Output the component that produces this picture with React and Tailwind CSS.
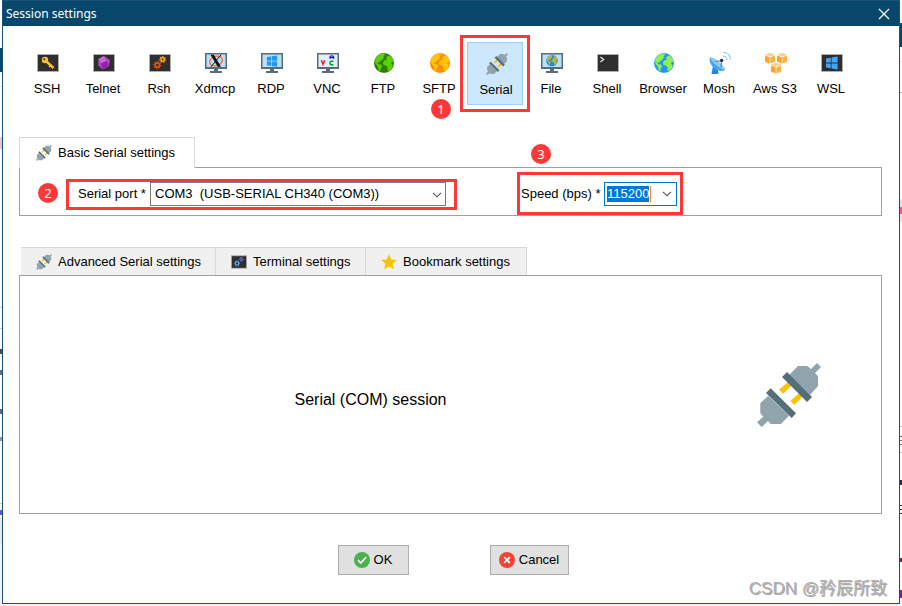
import { useEffect, useRef, useState } from 'react';

function PlugIcon({ className = 'size-4' }) {
  return (
    <svg viewBox="0 0 64 64" className={className} aria-hidden="true">
      <path fill="#ffc107" d="M30.7 19.3 34.5 22.7 26 30.7 22 26.7ZM42 30.3 45.3 33.7 37.3 42 33.3 38Z" />
      <path fill="#90a4ae" d="M32 12 41 3H50L54 6 60 0 64 4 58 10 61 13V23L53 32Z" />
      <path fill="#90a4ae" d="M11.3 32.7 3.3 40.3V50.3L6.3 53.7 0 59.3 4.7 64 11 58 13.7 61H24L32 52.7Z" />
      <path fill="#546e7a" d="M30 9 55 34 50 39 25 14ZM13.7 25.3 39 50.3 34.7 55 9 30Z" />
    </svg>
  );
}

function Terminal({ children, className = 'w-[22px] h-[22px]' }) {
  return (
    <svg viewBox="0 0 22 22" className={className} aria-hidden="true">
      <rect x="0.5" y="2.5" width="21" height="17" fill="#2f2f2f" stroke="#b0b0b0" />
      {children}
    </svg>
  );
}

function Monitor({ children, screen = '#bbdefb' }) {
  return (
    <svg viewBox="0 0 22 22" className="w-[22px] h-[22px]" aria-hidden="true">
      <path fill="#546e7a" d="M0 1H22V17H0ZM9 17H13V19H17V21H5V19H9Z" />
      <rect x="1.5" y="2.5" width="19" height="12.5" fill={screen} />
      {children}
    </svg>
  );
}

function GlobeShape({ sea, land }) {
  return (
    <>
      <circle cx="11" cy="11" r="10" fill={sea} />
      <path
        fill={land}
        d="M2.2 7C3.4 4.4 6 2.2 9 1.4L11.4 1.6 12 3 10.2 4.2 11.6 5.4 9.8 6.4 9.4 8 7.4 8.8 6.6 10.6 4.4 10.2 5 12.2 8 12.6 9.2 14.4 7.6 16.6 7.2 19.8C5.4 18.8 5.2 16.6 5 14.8L2.2 11.4ZM15.2 3.4 17.4 4.2C19.4 6 20.6 8 20.8 10.4L19 9.8 18 11.4 19.8 13.2 18.8 16.4 15.8 19.2 14.4 18 14.6 15.2 13 13.4 10.6 13 9.8 10.8 11.4 8.4 14 7.6 13 6Z"
      />
    </>
  );
}

function Globe({ sea, land }) {
  return (
    <svg viewBox="0 0 22 22" className="w-[22px] h-[22px]" aria-hidden="true">
      <GlobeShape sea={sea} land={land} />
    </svg>
  );
}

function Gear({ cx, cy, r, color }) {
  return (
    <g fill="none" stroke={color}>
      <circle cx={cx} cy={cy} r={r} strokeWidth="1.7" />
      <circle cx={cx} cy={cy} r={r + 1.2} strokeWidth="1.2" strokeDasharray="1.3 1.3" />
    </g>
  );
}

function WindowsShape({ color }) {
  return <path fill={color} d="M5 6.4 9.8 5.7V10.6H5ZM10.6 5.5 16.6 4.6V10.6H10.6ZM5 11.4H9.8V16.3L5 15.6ZM10.6 11.4H16.6V17.4L10.6 16.5Z" />;
}

function Cube({ x, y }) {
  return (
    <g transform={`translate(${x} ${y})`}>
      <path fill="#fbb040" d="M5 0 9.6 1.7 5 3.4 0.4 1.7Z" />
      <path fill="#f9a530" d="M0 2.5 4.7 4.2V10.6L0 8.7Z" />
      <path fill="#fbb040" d="M5.3 4.2 10 2.5V8.7L5.3 10.6Z" />
      <path fill="none" stroke="#fff" strokeWidth="0.5" d="M2.6 1.7 5 0.9 7.3 1.7 5 2.5Z" />
    </g>
  );
}

const sessions = [
  {
    name: 'SSH',
    icon: (
      <Terminal>
        <circle cx="8" cy="8" r="3.2" fill="#fbc02d" />
        <path stroke="#fbc02d" strokeWidth="2.4" d="M9 9 16.5 16" />
        <path stroke="#fbc02d" strokeWidth="1.2" d="M12 15 14 13" />
        <circle cx="7.2" cy="7.2" r="1" fill="#2f2f2f" />
      </Terminal>
    ),
  },
  {
    name: 'Telnet',
    icon: (
      <Terminal>
        <path fill="#ab47bc" d="M11 4 17 8 16 14.5 10 17.5 5 13.5 5.5 7Z" />
        <path fill="#ce63dd" d="M11 4 13.5 9 8 11.5 5.5 7Z" />
        <path fill="#8e24aa" d="M13.5 9 16 14.5 10 17.5 8 11.5Z" />
      </Terminal>
    ),
  },
  {
    name: 'Rsh',
    icon: (
      <Terminal>
        <Gear cx={8.3} cy={13} r={2.2} color="#e65100" />
        <Gear cx={13.6} cy={7.4} r={1.7} color="#fb9b14" />
      </Terminal>
    ),
  },
  {
    name: 'Xdmcp',
    icon: (
      <Monitor>
        <ellipse cx="11" cy="9" rx="6.5" ry="4.6" fill="none" stroke="#f4743b" strokeWidth="1.4" transform="rotate(-20 11 9)" />
        <path fill="#111" d="M5.5 2.8H8.8L16 14.8H12.7Z" />
        <path stroke="#111" strokeWidth="1" d="M16 2.8 6 14.8" />
      </Monitor>
    ),
  },
  {
    name: 'RDP',
    icon: (
      <Monitor>
        <g transform="translate(1.5 -.6) scale(.88)">
          <WindowsShape color="#2196f3" />
        </g>
      </Monitor>
    ),
  },
  {
    name: 'VNC',
    icon: (
      <Monitor screen="#e1effb">
        <path fill="none" stroke="#f01818" strokeWidth="1.5" d="M4.3 8.3 6 12.4 7.7 8.3" />
        <path fill="none" stroke="#1a1ae0" strokeWidth="1.3" d="M13 6.8V4.8Q13 3.8 14.8 3.8T16.6 4.8V6.8M13 5.6H16.6" />
        <path fill="none" stroke="#0b9b2c" strokeWidth="1.5" d="M16.4 9.2H14.2Q13 9.2 13 11T14.2 12.8H16.4" />
      </Monitor>
    ),
  },
  { name: 'FTP', icon: <Globe sea="#2e7d07" land="#5bd10c" /> },
  { name: 'SFTP', icon: <Globe sea="#ff8c00" land="#ffc50a" /> },
  { name: 'Serial', icon: <PlugIcon className="w-[22px] h-[22px]" /> },
  {
    name: 'File',
    icon: (
      <Monitor>
        <g transform="translate(4.7 2.4) scale(.57)">
          <GlobeShape sea="#1e88e5" land="#b5b832" />
        </g>
      </Monitor>
    ),
  },
  {
    name: 'Shell',
    icon: (
      <Terminal>
        <path fill="none" stroke="#e0e0e0" strokeWidth="1.3" d="M3.4 5 6.6 7.5 3.4 10" />
      </Terminal>
    ),
  },
  { name: 'Browser', icon: <Globe sea="#2196f3" land="#8cf04f" /> },
  {
    name: 'Mosh',
    icon: (
      <svg viewBox="0 0 22 22" className="w-[22px] h-[22px]" aria-hidden="true">
        <path fill="#1e88e5" d="M4 14 9 18.5 9.5 22H2.5Z" />
        <path fill="#42a5f5" d="M1.2 5.2C-.8 9 2.4 14.4 6.8 17.2 10.6 19.4 14.6 19.6 16.4 17.6Z" />
        <path fill="#90caf9" d="M1.2 5.2C5 4.8 15.5 13.2 16.4 17.6 12 17.8 2.2 10.4 1.2 5.2Z" />
        <path stroke="#37627f" strokeWidth=".8" d="M12.5 8.5 6.5 9.6M12.5 8.5 12 15.5" />
        <circle cx="12.6" cy="8.4" r="1.6" fill="#1a237e" />
        <path fill="none" stroke="#64b5f6" strokeWidth="1" strokeDasharray="4 .6" d="M14 4Q17.8 4.2 18 8M14.5.5Q21 .8 21.4 7.5" />
      </svg>
    ),
  },
  {
    name: 'Aws S3',
    icon: (
      <svg viewBox="0 0 22 22" className="w-[22px] h-[22px]" aria-hidden="true">
        <Cube x={0} y={1} />
        <Cube x={12} y={1} />
        <Cube x={6} y={11} />
      </svg>
    ),
  },
  {
    name: 'WSL',
    icon: (
      <Terminal>
        <WindowsShape color="#42a5f5" />
      </Terminal>
    ),
  },
];

const settingsTabs = [
  { label: 'Advanced Serial settings', width: 'min-w-[195px]', icon: <PlugIcon /> },
  {
    label: 'Terminal settings',
    width: 'min-w-[150px]',
    icon: (
      <Terminal className="size-4">
        <Gear cx={8.3} cy={13} r={2.4} color="#4fa8f0" />
        <Gear cx={14.2} cy={7.4} r={1.6} color="#5c6bc0" />
      </Terminal>
    ),
  },
  {
    label: 'Bookmark settings',
    width: 'min-w-[161px]',
    icon: (
      <svg viewBox="0 0 16 16" className="size-4" aria-hidden="true">
        <path fill="#f5c400" d="M8 .5 10.3 5.5 15.8 6 11.7 9.8 12.9 15.3 8 12.4 3.1 15.3 4.3 9.8.2 6 5.7 5.5Z" />
      </svg>
    ),
  },
];

// slivers of the windows behind the dialog
const leftEdge = [
  ['h-[48px]', 'bg-white'],
  ['h-[24px]', 'bg-[#07476b]'],
  ['h-[14px]', 'bg-white'],
  ['h-px', 'bg-[#e0e0e0]'],
  ['h-[50px]', 'bg-white'],
  ['h-[12px]', 'bg-[#e5c9cb]'],
  ['h-[158px]', 'bg-white'],
  ['h-px', 'bg-[#d0d0d0]'],
  ['h-[20px]', 'bg-white'],
  ['h-px', 'bg-[#d0d0d0]'],
  ['h-[20px]', 'bg-white'],
  ['h-[5px]', 'bg-[#5a4a3a]'],
  ['h-[16px]', 'bg-white'],
  ['h-[5px]', 'bg-[#5b6f9a]'],
  ['h-[34px]', 'bg-white'],
  ['h-[5px]', 'bg-[#6a5aae]'],
  ['h-[23px]', 'bg-white'],
  ['h-[4px]', 'bg-[#8f8fd0]'],
  ['h-[62px]', 'bg-white'],
  ['h-px', 'bg-[#d0d0d0]'],
  ['h-[6px]', 'bg-white'],
  ['h-[5px]', 'bg-[#5a5af0]'],
  ['h-[3px]', 'bg-white'],
  ['h-[26px]', 'bg-[#e8e8e8]'],
];

const rightEdge = [
  ['h-[23px]', 'bg-white'],
  ['h-[24px]', 'bg-[#07476b]'],
  ['h-[14px]', 'bg-white'],
  ['h-px', 'bg-[#e0e0e0]'],
  ['h-[30px]', 'bg-white'],
  ['h-px', 'bg-[#a8a8a8]'],
  ['h-[106px]', 'bg-white'],
  ['h-[8px]', 'bg-[#e4e4e4]'],
  ['h-[7px]', 'bg-[#f055a0]'],
  ['h-[8px]', 'bg-[#e4e4e4]'],
  ['h-[204px]', 'bg-white'],
  ['h-px', 'bg-[#c0c0c0]'],
  ['h-[9px]', 'bg-white'],
  ['h-px', 'bg-[#707070]'],
  ['h-[3px]', 'bg-white'],
  ['h-px', 'bg-[#707070]'],
  ['h-[3px]', 'bg-white'],
  ['h-px', 'bg-[#707070]'],
  ['h-[7px]', 'bg-white'],
  ['h-px', 'bg-[#c0c0c0]'],
  ['h-[27px]', 'bg-white'],
  ['h-[5px]', 'bg-[#1b2f55]'],
  ['h-[20px]', 'bg-white'],
  ['h-px', 'bg-[#303030]'],
  ['h-[3px]', 'bg-white'],
  ['h-px', 'bg-[#303030]'],
  ['h-[3px]', 'bg-white'],
  ['h-px', 'bg-[#303030]'],
  ['h-[44px]', 'bg-white'],
  ['h-[4px]', 'bg-[#5a2a70]'],
  ['h-[28px]', 'bg-white'],
  ['h-[8px]', 'bg-[#7a20a0]'],
];

function Edge({ parts }) {
  return (
    <div className="w-0.5 shrink-0" aria-hidden="true">
      {parts.map(([height, color], i) => (
        <div key={i} className={`${height} ${color}`} />
      ))}
    </div>
  );
}

function Badge({ children, className = '' }) {
  return (
    <span className={`flex size-5 shrink-0 items-center justify-center rounded-full bg-[#fd3838] font-['Noto_Sans',sans-serif] text-[13px] leading-none text-white ${className}`}>
      {children}
    </span>
  );
}

function Chevron({ className = '' }) {
  return (
    <svg viewBox="0 0 10 6" className={`h-1.5 w-2.5 ${className}`} aria-hidden="true">
      <path fill="none" stroke="#505050" strokeWidth="1.1" d="M1 .8 5 4.8 9 .8" />
    </svg>
  );
}

export default function App() {
  const [session, setSession] = useState('Serial');
  const [port, setPort] = useState('COM3');
  const [speed, setSpeed] = useState('115200');
  const speedRef = useRef(null);

  useEffect(() => {
    speedRef.current?.focus();
    speedRef.current?.select();
  }, []);

  return (
    <div className="flex min-h-screen bg-[#f4f4f6] font-['Liberation_Sans',Arial,sans-serif] text-[13px] leading-4 text-black">
      <Edge parts={leftEdge} />

      <div className="relative mb-0.5 flex min-w-0 flex-1 flex-col border border-[#1b5276] bg-white">
        <header className="flex h-[25px] items-center justify-between bg-[#07476b] pl-[3px] pr-[9px] text-white">
          <h1 className="font-['Noto_Sans',sans-serif] text-[12px]">Session settings</h1>
          <button type="button" aria-label="Close">
            <svg viewBox="0 0 12 12" className="size-3" aria-hidden="true">
              <path stroke="#fff" strokeWidth="1.3" d="M1 1 11 11M11 1 1 11" />
            </svg>
          </button>
        </header>

        {/* Session types */}
        <nav className="mt-4 flex pl-4">
          {sessions.map(({ name, icon }) => (
            <div key={name} className="relative w-14 shrink-0">
              <button
                type="button"
                onClick={() => setSession(name)}
                className={`flex h-[63px] w-full flex-col items-center gap-[7px] whitespace-nowrap border ${
                  session === name ? 'border-[#99d1ff] bg-[#cce8ff] pl-0.5 pt-[10px]' : 'border-transparent pt-[9px]'
                }`}
              >
                <span className="pl-0.5">{icon}</span>
                {name}
              </button>
              {name === 'Serial' && (
                <>
                  <div className="pointer-events-none absolute -inset-[7px] border-3 border-[#fd3838]" />
                  <Badge className="absolute -left-9 top-[57px]">1</Badge>
                </>
              )}
            </div>
          ))}
        </nav>

        {/* Basic settings */}
        <section className="mt-8 pl-4 pr-[17px]">
          <div className="flex">
            <button type="button" className="relative z-10 -mb-px flex h-[31px] w-[176px] items-center gap-[6px] border border-b-0 border-[#d9d9d9] bg-white pl-4">
              <PlugIcon />
              Basic Serial settings
            </button>
          </div>
          <div className="flex h-[49px] items-start border border-[#a0a0a0]">
            <Badge className="ml-[18px] mt-[15px]">2</Badge>
            <div className="ml-2 mt-[11px] flex h-[31px] w-[391px] items-start border-3 border-[#fd3838] pl-[9px]">
              <label htmlFor="port" className="w-[72px] leading-6">Serial port *</label>
              <div className="relative w-[296px]">
                <select
                  id="port"
                  value={port}
                  onChange={(e) => setPort(e.target.value)}
                  className="block h-6 w-full appearance-none border border-[#7a7a7a] bg-white pl-1 pr-6"
                >
                  <option value="COM3">{'COM3\u00a0 (USB-SERIAL CH340 (COM3))'}</option>
                </select>
                <Chevron className="pointer-events-none absolute right-1 top-[10px]" />
              </div>
            </div>
            <div className="relative ml-[60px] mt-1 flex h-[43px] w-[166px] items-center border-3 border-[#fd3838] pl-px">
              <Badge className="absolute -top-[31px] left-[11px]">3</Badge>
              <label htmlFor="speed" className="w-[83px]">Speed (bps) *</label>
              <div className="flex h-6 w-[73px] items-center justify-between border border-[#0078d7] bg-white pl-0.5 pr-1">
                <input
                  id="speed"
                  ref={speedRef}
                  value={speed}
                  onChange={(e) => setSpeed(e.target.value)}
                  className="h-4 w-[44px] border-r border-[#f08a30] leading-4 outline-none selection:bg-[#0078d7] selection:text-white"
                />
                <button type="button" aria-label="Choose speed">
                  <Chevron />
                </button>
              </div>
            </div>
          </div>
        </section>

        {/* Advanced settings */}
        <section className="mt-[31px] flex flex-1 flex-col pl-4 pr-[17px]">
          <div className="flex pl-0.5">
            {settingsTabs.map(({ label, width, icon }) => (
              <button
                key={label}
                type="button"
                className={`flex h-7 items-center gap-[6px] border-r border-t border-[#d9d9d9] bg-[#f0f0f0] pl-[15px] pt-px ${width}`}
              >
                {icon}
                {label}
              </button>
            ))}
          </div>
          <div className="flex min-h-[239px] items-center border border-[#a0a0a0]">
            <p className="flex-1 pt-2.5 text-center text-[16px] leading-5">Serial (COM) session</p>
            <div className="flex w-40 justify-center pr-6">
              <PlugIcon className="size-16" />
            </div>
          </div>
        </section>

        <footer className="mb-7 flex justify-center gap-[81px] pl-1">
          <button type="button" className="flex h-[30px] w-[71px] items-center justify-center gap-1 border border-[#adadad] bg-[#e1e1e1]">
            <svg viewBox="0 0 16 16" className="size-4" aria-hidden="true">
              <circle cx="8" cy="8" r="8" fill="#4caf50" />
              <path fill="none" stroke="#fff" strokeWidth="1.7" d="M4 8.2 6.8 11 12 5.2" />
            </svg>
            OK
          </button>
          <button type="button" className="flex h-[30px] w-[79px] items-center justify-center gap-1 border border-[#adadad] bg-[#e1e1e1]">
            <svg viewBox="0 0 16 16" className="size-4" aria-hidden="true">
              <circle cx="8" cy="8" r="8" fill="#f44336" />
              <path stroke="#fff" strokeWidth="1.8" d="M5.2 5.2 10.8 10.8M10.8 5.2 5.2 10.8" />
            </svg>
            Cancel
          </button>
        </footer>

        <p className="absolute bottom-0.5 right-3 font-['Liberation_Sans','Noto_Sans_CJK_SC',sans-serif] text-[17px] leading-6 text-[#b0b0b0] [text-shadow:1px_1px_0_#a8a8a8]">
          CSDN @矜辰所致
        </p>
      </div>

      <Edge parts={rightEdge} />
    </div>
  );
}
